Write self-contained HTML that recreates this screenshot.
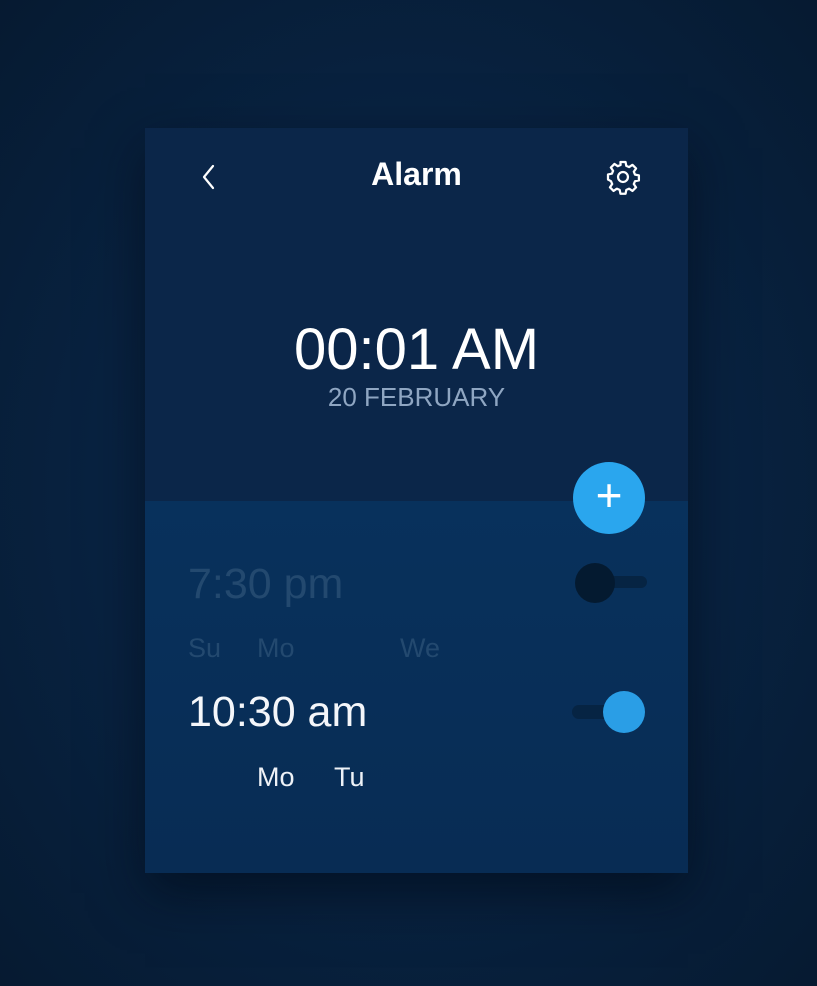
<!DOCTYPE html>
<html><head><style>
html,body{margin:0;padding:0}
body{width:817px;height:986px;overflow:hidden;position:relative;background:radial-gradient(ellipse at 50% 50%,#0b2a4c 0%,#082240 55%,#061a31 100%);font-family:"Liberation Sans",sans-serif}
.card{position:absolute;left:145px;top:128px;width:543px;height:745px;background:#0b2649;box-shadow:0 20px 50px rgba(0,8,20,.6)}
.bottom{position:absolute;left:0;top:373px;width:543px;height:372px;background:linear-gradient(#08315c,#082c54)}
.t{position:absolute;color:#fff;white-space:nowrap}
</style></head><body>
<div class="card">
<div class="bottom"></div>
<svg style="position:absolute;left:56px;top:36px" width="16" height="26" viewBox="0 0 16 26"><path d="M12 2 L3 13 L12 24" fill="none" stroke="#fff" stroke-width="2.2" stroke-linecap="round" stroke-linejoin="round"/></svg>
<div class="t" style="left:0;width:543px;text-align:center;top:28px;font-size:32px;font-weight:bold">Alarm</div>
<svg style="position:absolute;left:460px;top:31px" width="36" height="36" viewBox="0 0 24 24"><path fill="none" stroke="#fff" stroke-width="1.5" stroke-linejoin="round" d="M10.3 2h3.4l.5 2.6 1.9.8 2.2-1.5 2.4 2.4-1.5 2.2.8 1.9 2.6.5v3.4l-2.6.5-.8 1.9 1.5 2.2-2.4 2.4-2.2-1.5-1.9.8-.5 2.6h-3.4l-.5-2.6-1.9-.8-2.2 1.5-2.4-2.4 1.5-2.2-.8-1.9L2 13.7v-3.4l2.6-.5.8-1.9-1.5-2.2 2.4-2.4 2.2 1.5 1.9-.8z"/><circle cx="12" cy="12" r="3.3" fill="none" stroke="#fff" stroke-width="1.5"/></svg>
<div class="t" style="left:0;width:543px;text-align:center;top:188px;font-size:58px">00:01 AM</div>
<div class="t" style="left:0;width:543px;text-align:center;top:254px;font-size:26px;color:#8fa6c2">20 FEBRUARY</div>
<div style="position:absolute;left:428px;top:334px;width:72px;height:72px;border-radius:50%;background:#2aa6ee"></div>
<div class="t" style="left:428px;width:72px;text-align:center;top:342px;font-size:46px;line-height:50px;font-weight:300">+</div>
<div class="t" style="left:43px;top:432px;font-size:43px;color:#23496f">7:30 pm</div>
<div style="position:absolute;left:440px;top:448px;width:62px;height:12px;border-radius:6px;background:#062443"></div>
<div style="position:absolute;left:430px;top:435px;width:40px;height:40px;border-radius:50%;background:#041a30"></div>
<div class="t" style="left:43px;top:505px;font-size:27px;color:#23496f">Su</div>
<div class="t" style="left:112px;top:505px;font-size:27px;color:#23496f">Mo</div>
<div class="t" style="left:255px;top:505px;font-size:27px;color:#23496f">We</div>
<div class="t" style="left:43px;top:560px;font-size:43px;color:#f4f6fa">10:30 am</div>
<div style="position:absolute;left:427px;top:577px;width:60px;height:14px;border-radius:7px;background:#062443"></div>
<div style="position:absolute;left:458px;top:563px;width:42px;height:42px;border-radius:50%;background:#2a9ee6"></div>
<div class="t" style="left:112px;top:634px;font-size:27px;color:#eef2f7">Mo</div>
<div class="t" style="left:189px;top:634px;font-size:27px;color:#eef2f7">Tu</div>
</div>
</body></html>
